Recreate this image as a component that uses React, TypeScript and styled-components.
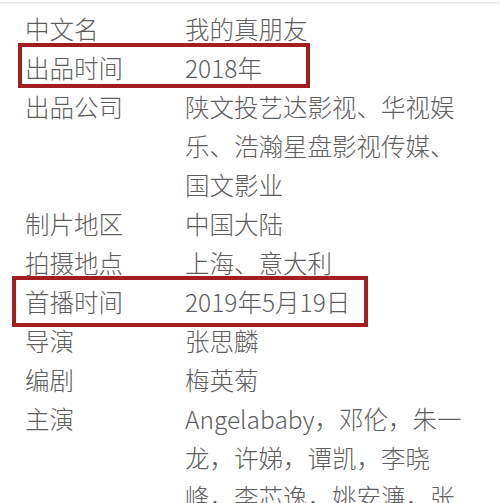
import React from "react";
import styled, { createGlobalStyle } from "styled-components";

const Global = createGlobalStyle`
  html, body {
    margin: 0;
    padding: 0;
    background: #ffffff;
  }
  body {
    font-family: "Noto Sans CJK SC", "Noto Sans", sans-serif;
  }
`;

const Page = styled.div`
  width: 500px;
  height: 503px;
  overflow: hidden;
  background: #fff;
  box-sizing: border-box;
  padding-top: 2px;
`;

const TopRule = styled.div`
  height: 1px;
  background: #e6e6e6;
  box-shadow: 0 1px 1px rgba(0, 0, 0, 0.04);
`;

const Table = styled.div`
  display: flex;
  flex-direction: column;
  padding: 6px 0 0 25px;
`;

const Row = styled.div`
  position: relative;
  display: grid;
  grid-template-columns: 160px 282px;
  font-family: "Noto Sans CJK SC", "Noto Sans", sans-serif;
  font-weight: 300;
  font-size: 24.5px;
  line-height: 39px;
  color: #5e5e5e;
`;

const Label = styled.div`
  white-space: nowrap;
`;

const Value = styled.div`
  word-break: normal;
  line-break: strict;
`;

const Mark = styled.div<{ $top: number; $bottom: number; $left: number; $width: number }>`
  position: absolute;
  top: ${(p) => p.$top}px;
  bottom: ${(p) => p.$bottom}px;
  left: ${(p) => p.$left}px;
  width: ${(p) => p.$width}px;
  border: 4px solid #a11f1f;
  box-sizing: border-box;
  pointer-events: none;
`;

type Item = {
  label: string;
  value: string;
  mark?: { top: number; bottom: number; left: number; width: number };
};

const items: Item[] = [
  { label: "中文名", value: "我的真朋友" },
  {
    label: "出品时间",
    value: "2018年",
    mark: { top: -5, bottom: -1, left: -7, width: 292 },
  },
  { label: "出品公司", value: "陕文投艺达影视、华视娱乐、浩瀚星盘影视传媒、国文影业" },
  { label: "制片地区", value: "中国大陆" },
  { label: "拍摄地点", value: "上海、意大利" },
  {
    label: "首播时间",
    value: "2019年5月19日",
    mark: { top: -6, bottom: -6, left: -13, width: 356 },
  },
  { label: "导演", value: "张思麟" },
  { label: "编剧", value: "梅英菊" },
  { label: "主演", value: "Angelababy，邓伦，朱一龙，许娣，谭凯，李晓峰，李芯逸，姚安濂，张晓谦" },
];

export default function App() {
  return (
    <Page>
      <Global />
      <TopRule />
      <Table>
        {items.map((it) => (
          <Row key={it.label}>
            <Label>{it.label}</Label>
            <Value>{it.value}</Value>
            {it.mark && (
              <Mark
                $top={it.mark.top}
                $bottom={it.mark.bottom}
                $left={it.mark.left}
                $width={it.mark.width}
              />
            )}
          </Row>
        ))}
      </Table>
    </Page>
  );
}
